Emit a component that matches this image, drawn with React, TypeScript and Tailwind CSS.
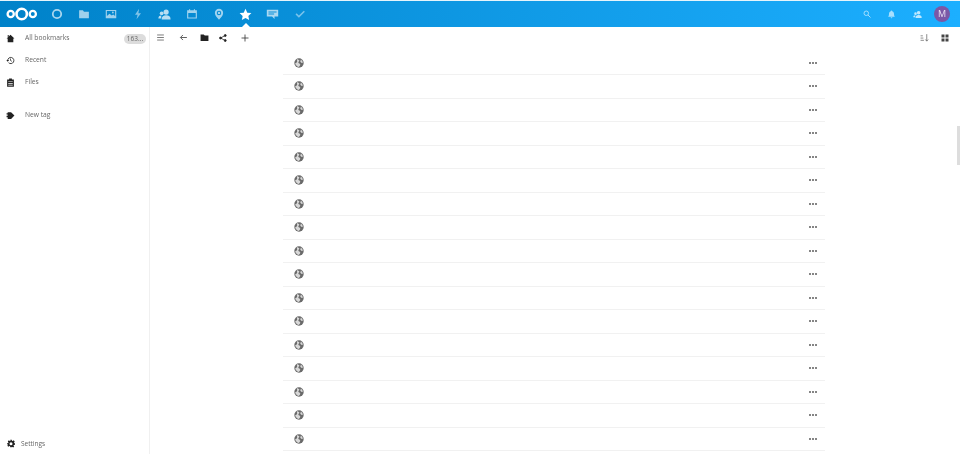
import React from "react";

const W = "#ffffff";

function AppIcon({ children, op = 0.7, size = 12 }: { children: React.ReactNode; op?: number; size?: number }) {
  return (
    <svg width={size} height={size} viewBox="0 0 16 16" fill={W} style={{ opacity: op }}>
      {children}
    </svg>
  );
}

const apps: { w: number; node: React.ReactNode; active?: boolean }[] = [
  { w: 27, node: <AppIcon op={0.66}><circle cx="8" cy="8" r="5.600" fill="none" stroke={W} strokeWidth="2.400" /></AppIcon> },
  { w: 27, node: <AppIcon op={0.62}><path d="M1.500 3h5l1.500 2h6.500v8.500h-13z" /></AppIcon> },
  { w: 27, node: <AppIcon op={0.62}><path fillRule="evenodd" d="M1 2.500h14v11H1zM2.500 4v6.500l3.500-3 3 2.500 2-1.500 2.500 2V4z" /><circle cx="10.500" cy="6" r="1.200" /></AppIcon> },
  { w: 27, node: <AppIcon op={0.5}><path d="M9.500 1L4 9h3.500L6 15l6-8H8.500z" /></AppIcon> },
  { w: 27, node: <AppIcon op={0.72} size={13}><circle cx="10" cy="5" r="3.200" /><path d="M4.500 14c0-3.500 2-5 5.500-5s5.500 1.500 5.500 5z" /><circle cx="4.500" cy="6.500" r="2.300" /><path d="M0.500 13c0-2.500 1-3.800 3.500-3.800l0 3.800z" /></AppIcon> },
  { w: 27, node: <AppIcon op={0.62}><path fillRule="evenodd" d="M1.500 3h2.500V1.500h1.500V3h5V1.500h1.500V3h2.500v11h-13zM3 6.500V12.500h10V6.500z" /></AppIcon> },
  { w: 27, node: <AppIcon op={0.62}><path fillRule="evenodd" d="M8 1a5.500 5.500 0 0 1 5.500 5.500C13.500 10 10 13 8 15.500 6 13 2.500 10 2.500 6.500A5.500 5.500 0 0 1 8 1zM8 3.500a3 3 0 1 0 0 6 3 3 0 0 0 0-6z" /><circle cx="8" cy="6.500" r="1.600" /></AppIcon> },
  { w: 27, active: true, node: <AppIcon op={1} size={13}><path d="M8 1l2.200 4.700 5.100.6-3.800 3.500 1 5.100L8 12.400l-4.500 2.500 1-5.100L.7 6.300l5.100-.6z" /></AppIcon> },
  { w: 27, node: <AppIcon op={0.66} size={13}><path fillRule="evenodd" d="M1 2h14v8.500h-4.500v3l-3-3H1zM3 4.300v1.200h10V4.300zM3 6.800V8h7V6.800z" /></AppIcon> },
  { w: 27, node: <AppIcon op={0.45}><path d="M2 8.500l1.500-1.500 3 3L13 3.500 14.500 5l-8 8z" /></AppIcon> },
];

function Globe() {
  return (
    <svg width="10" height="10" viewBox="0 0 16 16">
      <circle cx="8" cy="8" r="7.500" fill="#6a6a6a" />
      <path d="M5 1.500c1.500 1 3 1 3.500 2.500S6.500 6 7 7.500s3 1 3 3-1.500 3-2.500 4C5 14 2 11 2 8c1.500 0 2.500-.5 3-2S4 3 5 1.500z" fill="#d8d8d8" />
      <path d="M11 2.500l2.500 2.500.5 3-2.500-.5-1.500-2z" fill="#d8d8d8" />
    </svg>
  );
}

function Dots() {
  return (
    <div className="flex gap-[1px]">
      <span className="w-[2px] h-[2px] bg-[#858585]" />
      <span className="w-[2px] h-[2px] bg-[#858585]" />
      <span className="w-[2px] h-[2px] bg-[#858585]" />
    </div>
  );
}

function Row() {
  return (
    <div className="h-[23.5px] shrink-0 border-b border-[#f1f1f1] flex items-center justify-between pl-[11px] pr-[8px]">
      <Globe />
      <Dots />
    </div>
  );
}

function NavItem({ icon, label, badge, h = "h-[22px]" }: { icon: React.ReactNode; label: string; badge?: string; h?: string }) {
  return (
    <div className={`${h} flex items-center pr-[3px]`}>
      <div className="w-[25px] shrink-0 flex justify-center pr-[4px]">{icon}</div>
      <span className="text-[6.700px] text-[#666666] flex-1">{label}</span>
      {badge && (
        <span className="w-[22px] h-[10px] rounded-full bg-[#dcdcdc] text-[6.500px] leading-[10px] text-center text-[#666666]">{badge}</span>
      )}
    </div>
  );
}

const DarkIcon = ({ children, size = 9 }: { children: React.ReactNode; size?: number }) => (
  <svg width={size} height={size} viewBox="0 0 16 16" fill="#222222">{children}</svg>
);

export default function App() {
  return (
    <div className="relative w-[960px] h-[454px] overflow-hidden bg-white blur-[0.3px] font-['Open_Sans','Liberation_Sans',sans-serif]">
      <header className="h-[27px] border-t border-[#e6f4fb] flex items-center bg-gradient-to-r from-[#0082c9] to-[#1cafff]">
        <svg width="32" height="14" viewBox="0 0 32 14" className="ml-[6px] mr-[5px]" fill="none" stroke="#fff">
          <circle cx="15.700" cy="7" r="5.200" strokeWidth="2.600" />
          <circle cx="4.700" cy="7" r="3.100" strokeWidth="2.300" />
          <circle cx="26.800" cy="7" r="3.100" strokeWidth="2.300" />
        </svg>
        <nav className="flex">
          {apps.map((a, i) => (
            <div key={i} className="relative w-[27px] h-[26px] flex items-center justify-center">
              {a.node}
              {a.active && (
                <span className="absolute bottom-0 left-[9.500px] w-0 h-0 border-x-[4px] border-x-transparent border-b-[4px] border-b-white" />
              )}
            </div>
          ))}
        </nav>
        <div className="ml-auto flex items-center">
          <div className="w-[25px] flex justify-center pr-[2px]">
            <svg width="8" height="8" viewBox="0 0 16 16" fill="none" stroke="#fff" strokeWidth="2" opacity="0.6">
              <circle cx="6.500" cy="6.500" r="4.500" />
              <path d="M10 10l5 5" />
            </svg>
          </div>
          <div className="w-[25px] flex justify-center pr-[2px]">
            <AppIcon op={0.62} size={9}><path d="M8 1c.8 0 1.200.6 1.300 1.300C11.500 3 12.500 5 12.500 7.500c0 2 .7 3.200 1.500 4.500H2c.8-1.300 1.500-2.500 1.500-4.500C3.500 5 4.500 3 6.700 2.300 6.800 1.600 7.200 1 8 1z" /><path d="M6.500 13h3a1.500 1.500 0 0 1-3 0z" /></AppIcon>
          </div>
          <div className="w-[25px] flex justify-center">
            <AppIcon op={0.72} size={9}><circle cx="10" cy="5" r="3.200" /><path d="M4.500 14c0-3.500 2-5 5.500-5s5.500 1.500 5.500 5z" /><circle cx="4.500" cy="6.500" r="2.300" /><path d="M0.500 13c0-2.500 1-3.800 3.500-3.800l0 3.800z" /></AppIcon>
          </div>
          <div className="w-[16px] h-[16px] mr-[10px] ml-[4px] rounded-full bg-[#7b58a6] flex items-center justify-center text-[9px] text-[#e9e0f2]">M</div>
        </div>
      </header>

      <div className="flex h-[427px]">
        <aside className="w-[150px] shrink-0 border-r border-[#f0f0f0] flex flex-col pt-[0.500px]">
          <NavItem label="All bookmarks" badge="163..." icon={<DarkIcon><path d="M8 1.500l7 6.500h-2v6.500H3V8H1z" /><rect x="3" y="2" width="2" height="3" /></DarkIcon>} />
          <NavItem label="Recent" icon={<DarkIcon><path fill="none" stroke="#222" strokeWidth="1.500" d="M3 8a5.500 5.500 0 1 1 1.600 3.900" /><path d="M0.500 7h5L3 10z" /><path fill="none" stroke="#222" strokeWidth="1.300" d="M8 4.500V8l2.500 1.500" /></DarkIcon>} />
          <NavItem label="Files" icon={<DarkIcon><path fillRule="evenodd" d="M2 2.500h3.500V1h5v1.500H14v13H2zM4 6v1.300h8V6zM4 9v1.300h8V9zM4 12v1.300h8V12z" /></DarkIcon>} />
          <div className="h-[11px]" />
          <NavItem label="New tag" icon={<DarkIcon><path d="M3 2h6l6 6-6 6H3v-3H1V8.500h2V6H1V4h2z" /></DarkIcon>} />
          <div className="mt-auto h-[22px] flex items-center pl-[7px] translate-y-[0.500px]">
            <DarkIcon size={8}><path fillRule="evenodd" d="M6.500 0h3l.4 2.300 1.500.7L13.400 1.700l2 2.200-1.300 1.900.6 1.500L16 7.700v2.900l-2.300.4-.6 1.500 1.300 1.900-2 2-1.900-1.300-1.500.6L9.500 16h-3l-.4-2.300-1.500-.6-1.900 1.300-2-2 1.300-1.900-.6-1.500L0 10.600V7.700l2.300-.4.6-1.500L1.600 3.900l2-2.200 2 1.300 1.500-.7zM8 5.500a3 3 0 1 0 0 6 3 3 0 0 0 0-6z" /></DarkIcon>
            <span className="ml-[6px] text-[6.500px] text-[#666666]">Settings</span>
          </div>
        </aside>

        <main className="flex-1 min-w-0 flex flex-col">
          <div className="h-[24.500px] shrink-0 flex items-center pb-[3px]">
            <div className="w-[21px] flex justify-center">
              <svg width="9" height="9" viewBox="0 0 16 16" stroke="#666" strokeWidth="1.500"><path d="M2 3.500h12M2 8h12M2 12.500h12" /></svg>
            </div>
            <div className="w-[21px] flex justify-center ml-[2px]">
              <svg width="9" height="9" viewBox="0 0 16 16" stroke="#444" strokeWidth="1.500" fill="none"><path d="M14 8H3M7 3.500L2.500 8 7 12.500" /></svg>
            </div>
            <div className="w-[21px] flex justify-center">
              <DarkIcon><path d="M1 2.500h5.500L8.500 4.500H15v9.500H1z" /></DarkIcon>
            </div>
            <div className="w-[16px] flex justify-center">
              <svg width="8" height="8" viewBox="0 0 16 16" fill="#222" stroke="#222" strokeWidth="1.500"><circle cx="12.500" cy="3" r="2" /><circle cx="3" cy="8" r="2" /><circle cx="12.500" cy="13" r="2" /><path d="M12.500 3L3 8l9.500 5" fill="none" /></svg>
            </div>
            <div className="w-[27px] flex justify-center">
              <svg width="8" height="8" viewBox="0 0 16 16" stroke="#333" strokeWidth="1.600"><path d="M8 1v14M1 8h14" /></svg>
            </div>
            <div className="ml-auto flex items-center mr-[11px]">
              <svg width="9" height="9" viewBox="0 0 16 16" stroke="#555" strokeWidth="1.200" fill="none" className="mr-[12px]"><path d="M1 5h4M1 9h5M1 13h6M12 2v12M9.500 11.500L12 14.500l2.500-3" /></svg>
              <svg width="8" height="8" viewBox="0 0 16 16" fill="#444"><rect x="1" y="1" width="6" height="6" /><rect x="9" y="1" width="6" height="6" /><rect x="1" y="9" width="6" height="6" /><rect x="9" y="9" width="6" height="6" /></svg>
            </div>
          </div>
          <div className="w-[542px] ml-[133px] flex flex-col">
            {Array.from({ length: 17 }).map((_, i) => (
              <Row key={i} />
            ))}
          </div>
        </main>
      </div>
      <div className="absolute right-0 top-[126px] w-[3px] h-[39px] bg-[#dddddd]" />
    </div>
  );
}
